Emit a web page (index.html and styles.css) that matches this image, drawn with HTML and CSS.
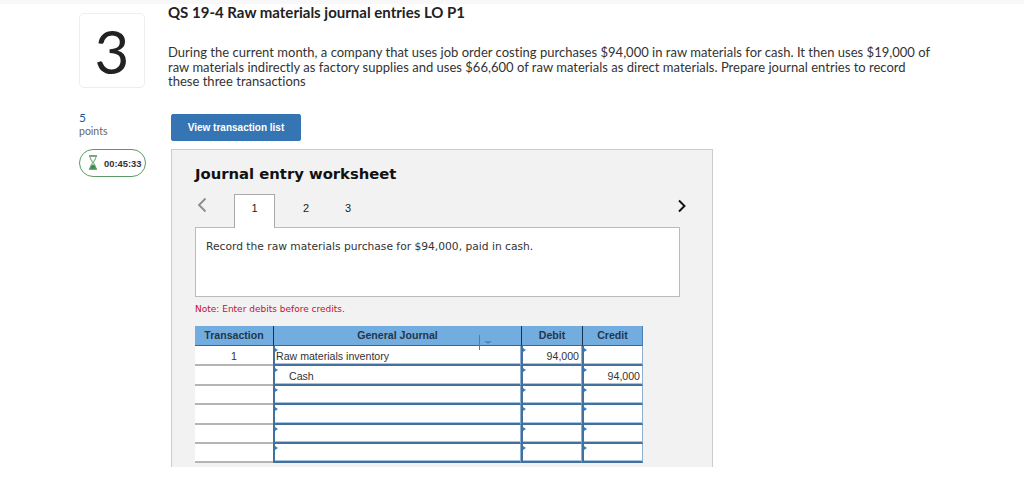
FILE: index.html
```html
<!DOCTYPE html>
<html lang="en">
<head>
<meta charset="utf-8">
<title>QS 19-4 Raw materials journal entries LO P1</title>
<link rel="stylesheet" href="styles.css">
</head>
<body>
<div class="topstrip"></div>
<div class="page">
  <aside class="side">
    <div class="qnum">3</div>
    <div class="pts">5</div>
    <div class="ptslabel">points</div>
    <div class="timer">
      <svg class="hourglass" width="10" height="15" viewBox="0 0 10 15" aria-hidden="true">
        <path d="M1 1h8M1 14h8" stroke="#4d8a57" stroke-width="1.400" fill="none"/>
        <path d="M2 1.500c0 3 2.200 4 2.600 6C4.200 9.500 2 10.500 2 13.500M8 1.500c0 3-2.200 4-2.600 6 .4 2 2.600 3 2.600 6" stroke="#7fae86" stroke-width="1.100" fill="none"/>
        <path d="M2 13.800c.2-2.300 1.800-3.500 3-4.600 1.200 1.100 2.800 2.300 3 4.600z" fill="#3f8a4f"/>
      </svg>
      <span>00:45:33</span>
    </div>
  </aside>
  <main class="main">
    <h1 class="title">QS 19-4 Raw materials journal entries LO P1</h1>
    <p class="question">During the current month, a company that uses job order costing purchases $94,000 in raw materials for cash. It then uses $19,000 of<br>raw materials indirectly as factory supplies and uses $66,600 of raw materials as direct materials. Prepare journal entries to record<br>these three transactions</p>
    <button class="viewbtn" type="button">View transaction list</button>
    <section class="panel">
      <h2 class="wtitle">Journal entry worksheet</h2>
      <div class="tabs">
        <svg class="chev" width="10" height="16" viewBox="0 0 10 16" aria-hidden="true"><path d="M8.500 1.500 2 8l6.500 6.500" fill="none" stroke="#8c8c8c" stroke-width="1.800"/></svg>
        <div class="tab active">1</div>
        <div class="tab two">2</div>
        <div class="tab three">3</div>
        <svg class="chev next" width="10" height="14" viewBox="0 0 10 14" aria-hidden="true"><path d="M2 1.500 7.500 7 2 12.500" fill="none" stroke="#111" stroke-width="1.900"/></svg>
      </div>
      <div class="record">Record the raw materials purchase for $94,000, paid in cash.</div>
      <div class="note">Note: Enter debits before credits.</div>
      <div class="journal">
        <div class="head h-tr">Transaction</div>
        <div class="head h-gj">General Journal<span class="sort"></span></div>
        <div class="head h-de">Debit</div>
        <div class="head h-cr">Credit</div>

        <div class="c tr">1</div><div class="c in gj">Raw materials inventory</div><div class="c in num">94,000</div><div class="c in num"></div>
        <div class="c tr"></div><div class="c in gj ind">Cash</div><div class="c in num"></div><div class="c in num">94,000</div>
        <div class="c tr"></div><div class="c in gj"></div><div class="c in num"></div><div class="c in num"></div>
        <div class="c tr"></div><div class="c in gj"></div><div class="c in num"></div><div class="c in num"></div>
        <div class="c tr"></div><div class="c in gj"></div><div class="c in num"></div><div class="c in num"></div>
        <div class="c tr"></div><div class="c in gj"></div><div class="c in num"></div><div class="c in num"></div>
      </div>
    </section>
  </main>
</div>
</body>
</html>
```
FILE: styles.css
```css
html, body { margin: 0; padding: 0; background: #fff; height: 478px; overflow: hidden; }
body { font-family: "Lato", "Liberation Sans", sans-serif; color: #222; }
.topstrip { height: 4px; background: #f8f8f8; }
.page { display: flex; padding-left: 79px; }
.side { width: 68px; margin-right: 20px; flex: none; }
.qnum {
  width: 66px; height: 75px; margin-top: 9px; box-sizing: border-box;
  border: 1px solid #eee; border-radius: 5px;
  display: flex; align-items: center; justify-content: center;
  font-size: 60px; font-weight: 400; color: #222; line-height: 1;
}
.pts { margin-top: 24px; font-size: 12px; line-height: 12px; color: #1b5a9c; }
.ptslabel { font-size: 10.500px; line-height: 15px; color: #666; }
.timer {
  margin-top: 10px; width: 67px; height: 28px; box-sizing: border-box;
  border: 1px solid #5d9a66; border-radius: 14px;
  display: flex; align-items: center; padding-left: 8px; gap: 6px;
  font-family: "Liberation Sans", sans-serif; font-size: 9.400px; font-weight: 700; color: #333;
}
.hourglass { flex: none; margin-top: -2px; }
.main { flex: none; width: 780px; }
.title { margin: 0; padding-left: 1px; font-size: 15px; line-height: 16px; font-weight: 700; color: #222; }
.question { margin: 25px 0 0 1px; font-size: 13px; line-height: 14.500px; color: #333; white-space: nowrap; letter-spacing: .015px; }
.viewbtn {
  display: block; margin: 25px 0 0 4px; width: 130px; height: 27px;
  border: 1px solid #3474b4; border-radius: 2px; background: #3675b3; color: #fff;
  font-family: "Liberation Sans", sans-serif; font-size: 10px; font-weight: 700; padding: 0;
}
.panel {
  margin: 8px 0 0 4px; width: 542px; height: 318px; box-sizing: border-box;
  background: #f2f2f2; border: 1px solid #ccc; border-bottom: 0; padding: 0 0 0 23px;
}
.wtitle { margin: 15px 0 0; font-family: "DejaVu Sans", sans-serif; font-size: 14.800px; line-height: 18px; font-weight: 700; color: #111; }
.tabs { display: flex; align-items: flex-start; margin-top: 11px; height: 33px; width: 485px; position: relative; z-index: 1; }
.chev { margin: 3px 0 0 2px; flex: none; }
.chev.next { margin: 5px -7px 0 auto; }
.tab {
  width: 41px; height: 34px; box-sizing: border-box; text-align: center;
  font-family: "Liberation Sans", sans-serif; font-size: 11px; line-height: 28px; color: #222;
}
.tab.active { margin-left: 27px; border: 1px solid #aaa; border-bottom: 0; background: #fff; height: 34px; line-height: 26px; }
.tab.two { width: 62px; }
.tab.three { width: 22px; }
.record {
  width: 485px; height: 70px; box-sizing: border-box; background: #fff; border: 1px solid #bbb;
  padding: 11px 10px; font-family: "DejaVu Sans", sans-serif; font-size: 10.700px; line-height: 15px; color: #333;
}
.note { margin-top: 6px; font-family: "DejaVu Sans", sans-serif; font-size: 9px; line-height: 12px; color: #c4102c; }
.journal {
  margin-top: 11px; width: 448px;
  display: grid; grid-template-columns: 78px 248px 61px 61px; grid-template-rows: 20px 20px 20px 19px 20px 19px 19px;
  background: #fff;
  font-family: "Liberation Sans", sans-serif; font-size: 10.600px; color: #333;
}
.head {
  background: #73ade0; font-weight: 700; color: #24364a; text-align: center; line-height: 19px;
  border-bottom: 1px solid #2f6aa5; border-left: 1px solid #16324d; box-sizing: border-box; position: relative;
}
.h-tr { border-left: 0; }
.h-cr { border-right: 1px solid #4a7fb5; }
.sort { position: absolute; left: 205px; top: 9px; height: 15px; border-left: 1px solid #3f7fc0; z-index: 2; }
.sort::after {
  content: ""; position: absolute; left: 4px; top: 6px;
  border-left: 4px solid transparent; border-right: 4px solid transparent; border-top: 3px solid #4f86c0;
}
.c { box-sizing: border-box; line-height: 21px; position: relative; }
.tr { text-align: center; border-bottom: 2px solid #b5b5b5; }
.in {
  border-left: 2px solid #44709e; border-bottom: 2px solid #44709e; border-right: 1px solid #8fb0d0;
  box-shadow: inset 0 -1px #a9c4de; padding-left: 1px;
}
.in::before {
  content: ""; position: absolute; left: 0; top: 2px;
  border-top: 2px solid transparent; border-bottom: 2px solid transparent; border-left: 3px solid #2f80d0;
}
.ind { padding-left: 14px; }
.num { text-align: right; padding-right: 2px; }
```
